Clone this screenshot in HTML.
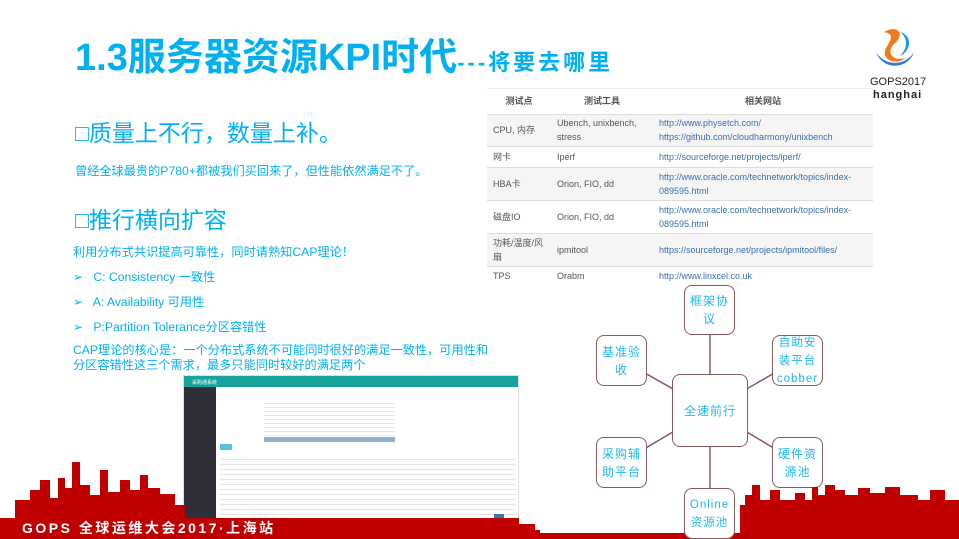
<!DOCTYPE html>
<html><head><meta charset="utf-8"><style>
*{margin:0;padding:0;box-sizing:border-box}
body{width:959px;height:539px;overflow:hidden;background:#fff;position:relative;font-family:"Liberation Sans","Noto Sans CJK SC",sans-serif;color:#00b0f0}
.a{position:absolute;white-space:nowrap}
table{border-collapse:collapse;font-size:9px;color:#555;table-layout:fixed}
td{border-top:1px solid #ddd;padding:0 6px;vertical-align:middle;line-height:14px;white-space:normal}
td a{color:#3a6fb0;text-decoration:none}
tr:nth-child(even) td{background:#f5f5f5}
.bx{position:absolute;border:1.5px solid #8b5a5a;border-radius:8px;background:#fff;color:#1fb6f0;font-size:12px;line-height:18px;text-align:center;display:flex;align-items:center;justify-content:center;letter-spacing:1px}
.t{font-size:12.2px}
</style></head><body>
<div class="a" style="left:75px;top:26px;font-size:38px;font-weight:bold;letter-spacing:0px">1.3服务器资源KPI时代<span style="font-size:22px;letter-spacing:3px">---将要去哪里</span></div>

<div class="a" style="left:75px;top:114px;font-size:23px"><b>□</b>质量上不行，数量上补。</div>
<div class="a t" style="left:75px;top:161px">曾经全球最贵的P780+都被我们买回来了，但性能依然满足不了。</div>
<div class="a" style="left:75px;top:201px;font-size:23px"><b>□</b>推行横向扩容</div>
<div class="a t" style="left:73px;top:242px">利用分布式共识提高可靠性，同时请熟知CAP理论！</div>
<div class="a t" style="left:73px;top:267px">➢&nbsp;&nbsp; C: Consistency 一致性</div>
<div class="a t" style="left:73px;top:292px">➢&nbsp;&nbsp; A: Availability 可用性</div>
<div class="a t" style="left:73px;top:317px">➢&nbsp;&nbsp; P:Partition Tolerance分区容错性</div>
<div class="a t" style="left:73px;top:343px;line-height:15px">CAP理论的核心是：一个分布式系统不可能同时很好的满足一致性，可用性和<br>分区容错性这三个需求，最多只能同时较好的满足两个</div>

<svg class="a" style="left:870px;top:22px" width="50" height="52" viewBox="0 0 50 52">
<path d="M6 30 A20 20 0 0 0 44 30 A22 22 0 0 1 6 30Z" fill="#2a7fd4"/>
<path d="M14 10 C28 2 36 12 24 22 C16 30 22 40 36 36 C26 44 10 38 16 26 C22 16 24 12 14 10Z" fill="#f07a20"/>
<path d="M30 10 C44 14 40 30 30 34 C38 26 38 16 30 10Z" fill="#1a9ae0"/>
</svg>
<div class="a" style="left:870px;top:76px;font-size:11px;color:#222">GOPS2017</div>
<div class="a" style="left:873px;top:89px;font-size:11px;color:#222;font-weight:bold;letter-spacing:1px">hanghai</div>

<div class="a" style="left:487px;top:88px;width:386px;height:197px;background:#fff;border-top:1px solid #eee">
<table style="width:386px">
<colgroup><col style="width:64px"><col style="width:102px"><col style="width:220px"></colgroup>
<tr style="height:25px"><td style="text-align:center;font-weight:bold;border-top:0">测试点</td><td style="text-align:center;font-weight:bold;border-top:0">测试工具</td><td style="text-align:center;font-weight:bold;border-top:0">相关网站</td></tr>
<tr style="height:32px"><td>CPU, 内存</td><td>Ubench, unixbench, stress</td><td><a>http://www.physetch.com/<br>https://github.com/cloudharmony/unixbench</a></td></tr>
<tr style="height:21px"><td>网卡</td><td>Iperf</td><td><a>http://sourceforge.net/projects/iperf/</a></td></tr>
<tr style="height:33px"><td>HBA卡</td><td>Orion, FIO, dd</td><td><a>http://www.oracle.com/technetwork/topics/index-<br>089595.html</a></td></tr>
<tr style="height:33px"><td>磁盘IO</td><td>Orion, FIO, dd</td><td><a>http://www.oracle.com/technetwork/topics/index-<br>089595.html</a></td></tr>
<tr style="height:33px"><td>功耗/温度/风扇</td><td>ipmitool</td><td><a>https://sourceforge.net/projects/ipmitool/files/</a></td></tr>
<tr style="height:20px"><td>TPS</td><td>Orabm</td><td><a>http://www.linxcel.co.uk</a></td></tr>
</table></div>

<div class="a" style="left:183px;top:375px;width:336px;height:150px;background:#fff;border:1px solid #ddd;overflow:hidden">
<div style="height:11px;background:#16a39e;color:#fff;font-size:5px;padding:3px 8px">采购通系统</div>
<div style="position:absolute;left:0;top:11px;width:32px;height:140px;background:#2e2f38"></div>
<div style="position:absolute;left:80px;top:24px;width:131px;height:43px;background:repeating-linear-gradient(#fff 0 3px,#e8e8e8 3px 4px)"></div>
<div style="position:absolute;left:80px;top:61px;width:131px;height:5px;background:#8fb3cc"></div>
<div style="position:absolute;left:36px;top:68px;width:12px;height:6px;background:#5bc0de"></div>
<div style="position:absolute;left:36px;top:79px;width:296px;height:60px;background:repeating-linear-gradient(#fff 0 4px,#e5e5e5 4px 5px)"></div>
<div style="position:absolute;left:310px;top:138px;width:10px;height:5px;background:#337ab7"></div>
</div>

<svg class="a" style="left:0;top:0" width="959" height="539">
<g stroke="#8b5a5a" stroke-width="1.5">
<line x1="710" y1="310" x2="710" y2="400"/><line x1="710" y1="420" x2="710" y2="510"/>
<line x1="622" y1="360" x2="710" y2="410"/><line x1="797" y1="360" x2="710" y2="410"/>
<line x1="622" y1="462" x2="710" y2="410"/><line x1="797" y1="462" x2="710" y2="410"/>
</g></svg>
<div class="bx" style="left:684px;top:285px;width:51px;height:50px">框架协<br>议</div>
<div class="bx" style="left:596px;top:335px;width:51px;height:51px">基准验<br>收</div>
<div class="bx" style="left:772px;top:335px;width:51px;height:51px;font-size:11.5px">自助安<br>装平台<br>cobber</div>
<div class="bx" style="left:672px;top:374px;width:76px;height:73px">全速前行</div>
<div class="bx" style="left:596px;top:437px;width:51px;height:51px">采购辅<br>助平台</div>
<div class="bx" style="left:772px;top:437px;width:51px;height:51px">硬件资<br>源池</div>

<svg class="a" style="left:0;top:0" width="959" height="539">
<path fill="#c00000" d="M0 539 V518 L15 518 V500 L30 500 V490 L40 490 V480 L50 480 V498 L58 498 V478 L65 478 V488 L72 488 V462 L80 462 V485 L90 485 V495 L100 495 V470 L108 470 V492 L120 492 V480 L130 480 V490 L140 490 V475 L148 475 V488 L160 488 V494 L175 494 V505 L185 505 V518 L519 518 V524 L535 524 V530 L540 530 V539Z"/>
<path fill="#c00000" d="M0 533 H959 V539 H0Z"/>
<path fill="#c00000" d="M740 539 V505 L745 505 V495 L752 495 V485 L760 485 V500 L770 500 V490 L780 490 V500 L795 500 V493 L805 493 V500 L812 500 V487 L818 487 V495 L825 495 V485 L835 485 V490 L845 490 V495 L858 495 V488 L870 488 V493 L885 493 V487 L900 487 V495 L918 495 V500 L930 500 V490 L945 490 V500 L959 500 V539Z"/>
</svg>
<div class="bx" style="left:684px;top:488px;width:51px;height:51px;font-size:11.5px">Online<br>资源池</div>
<div class="a" style="left:22px;top:518px;font-size:14px;font-weight:bold;color:#fff;letter-spacing:2.5px">GOPS 全球运维大会2017·上海站</div>
</body></html>
